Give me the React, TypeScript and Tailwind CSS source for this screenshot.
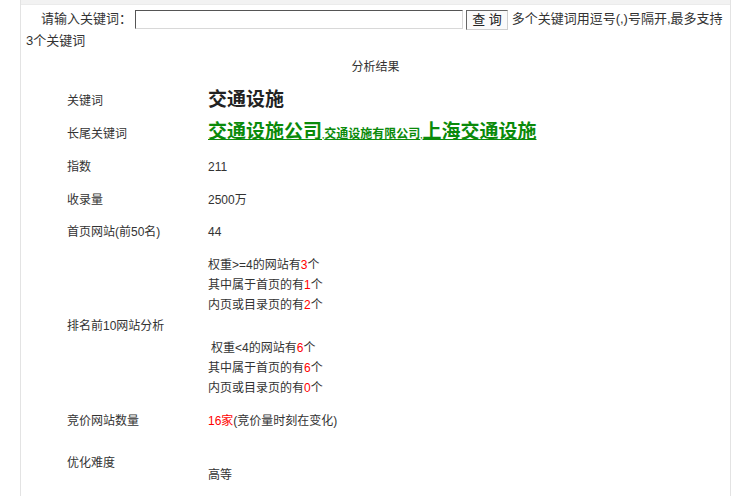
const font = "font-['Liberation_Sans','Noto_Sans_CJK_SC',sans-serif]";

function Red({ children }: { children: React.ReactNode }) {
  return <span className="text-[#ff0000]">{children}</span>;
}

function Row({
  label,
  h,
  children,
}: {
  label: string;
  h: string;
  children: React.ReactNode;
}) {
  return (
    <div className={`flex items-center ${h}`}>
      <div className="w-[141px] shrink-0">{label}</div>
      <div>{children}</div>
    </div>
  );
}

export default function App() {
  return (
    <div className={`${font} h-[496px] bg-white text-[#333]`}>
      <div className="ml-[20px] h-full w-[711px] border-x border-[#e3e3e3]">
        <div className="h-[5px] border-b border-[#ebebeb] bg-[#f2f2f2]" />

        <div className="px-[5px] pt-[3px] text-[13px] leading-[22px]">
          <span className="inline-block w-[15px]" />
          <span>请输入关键词：</span>
          <input
            type="text"
            className="ml-[3px] h-[19px] w-[328px] border border-t-[#555] border-l-[#555] border-r-[#d8d8d8] border-b-[#d8d8d8] align-middle outline-none"
          />
          <button
            type="button"
            className="ml-[3px] h-[20px] w-[42px] border border-t-[#666] border-l-[#666] border-r-[#cfcfcf] border-b-[#cfcfcf] bg-[#fafafa] align-middle text-[13px] leading-[17px] text-[#222]"
          >
            查 询
          </button>{" "}
          多个关键词用逗号(,)号隔开,最多支持3个关键词
        </div>

        <div className="mt-[5px] text-center text-[12px] leading-[20px]">分析结果</div>

        <div className="ml-[46px] mt-[8px] text-[12px] leading-[20px]">
          <Row label="关键词" h="h-[32px]">
            <span className="text-[19px] font-bold text-[#222]">交通设施</span>
          </Row>
          <Row label="长尾关键词" h="h-[33px]">
            <span className="font-bold text-[#0a8a0a]">
              <a className="text-[19px] underline">交通设施公司</a>
              <span className="text-[8px]">,</span>
              <a className="text-[12px] underline">交通设施有限公司</a>
              <span className="text-[8px]">,</span>
              <a className="text-[19px] underline">上海交通设施</a>
            </span>
          </Row>
          <Row label="指数" h="h-[33px]">211</Row>
          <Row label="收录量" h="h-[33px]">2500万</Row>
          <Row label="首页网站(前50名)" h="h-[32px]">44</Row>
          <Row label="排名前10网站分析" h="h-[156px]">
            <div>
              <div>
                权重&gt;=4的网站有<Red>3</Red>个
              </div>
              <div>
                其中属于首页的有<Red>1</Red>个
              </div>
              <div>
                内页或目录页的有<Red>2</Red>个
              </div>
              <div className="mt-[23px] pl-[3px]">
                权重&lt;4的网站有<Red>6</Red>个
              </div>
              <div>
                其中属于首页的有<Red>6</Red>个
              </div>
              <div>
                内页或目录页的有<Red>0</Red>个
              </div>
            </div>
          </Row>
          <Row label="竞价网站数量" h="h-[34px]">
            <Red>16家</Red>(竞价量时刻在变化)
          </Row>
          <div className="flex pt-[15px]">
            <div className="w-[141px] shrink-0">优化难度</div>
            <div className="pt-[12px]">高等</div>
          </div>
        </div>
      </div>
    </div>
  );
}
